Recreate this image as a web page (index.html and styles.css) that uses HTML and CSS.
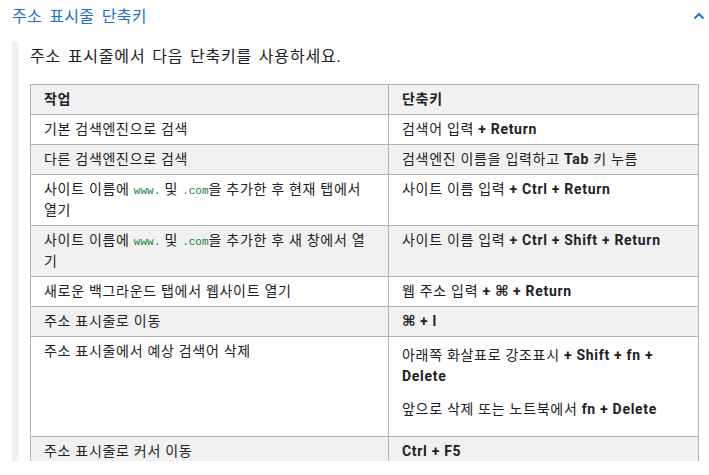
FILE: index.html
```html
<!DOCTYPE html>
<html lang="ko">
<head>
<meta charset="utf-8">
<link rel="stylesheet" href="styles.css">
</head>
<body>
<div class="header">
  <span class="title">주소 표시줄 단축키</span>
  <svg class="chev" width="12" height="8" viewBox="0 0 12 8"><path d="M1.5 6.5 L6 2 L10.5 6.5" fill="none" stroke="#1a73e8" stroke-width="2"/></svg>
</div>
<div class="panel">
  <p class="intro">주소 표시줄에서 다음 단축키를 사용하세요.</p>
  <table class="keys">
    <colgroup><col class="c1"><col class="c2"></colgroup>
    <thead>
      <tr><th>작업</th><th>단축키</th></tr>
    </thead>
    <tbody>
      <tr><td>기본 검색엔진으로 검색</td><td>검색어 입력 <b>+ Return</b></td></tr>
      <tr><td>다른 검색엔진으로 검색</td><td>검색엔진 이름을 입력하고 <b>Tab</b> 키 누름</td></tr>
      <tr><td>사이트 이름에 <code>www.</code> 및 <code>.com</code>을 추가한 후 현재 탭에서 열기</td><td>사이트 이름 입력 <b>+ Ctrl + Return</b></td></tr>
      <tr><td>사이트 이름에 <code>www.</code> 및 <code>.com</code>을 추가한 후 새 창에서 열기</td><td>사이트 이름 입력 <b>+ Ctrl + Shift + Return</b></td></tr>
      <tr><td>새로운 백그라운드 탭에서 웹사이트 열기</td><td>웹 주소 입력 <b>+ <span class="cmd">⌘</span> + Return</b></td></tr>
      <tr><td>주소 표시줄로 이동</td><td><b><span class="cmd">⌘</span> + l</b></td></tr>
      <tr><td>주소 표시줄에서 예상 검색어 삭제</td><td><p class="p1">아래쪽 화살표로 강조표시 <b>+ Shift + fn + Delete</b></p><p class="p2">앞으로 삭제 또는 노트북에서 <b>fn + Delete</b></p></td></tr>
      <tr><td>주소 표시줄로 커서 이동</td><td><b>Ctrl + F5</b></td></tr>
    </tbody>
  </table>
</div>
</body>
</html>
```

FILE: styles.css
```css
body {
  margin: 0;
  font-family: Roboto, "Noto Sans CJK KR", sans-serif;
  color: #202124;
  background: #fff;
}
.header {
  display: flex;
  align-items: center;
  justify-content: space-between;
  height: 30px;
  padding: 0 4px 0 12px;
}
.title {
  font-size: 16px;
  color: #1a6fd6;
  letter-spacing: 0.3px;
  word-spacing: 3px;
}
.chev {
  margin-top: 2px;
}
.panel {
  margin: 11px 0 0 12px;
  border-left: 7px solid #f1f1f1;
  padding-left: 11px;
  padding-right: 11px;
  height: 420px;
}
.intro {
  margin: 0;
  padding-top: 4px;
  font-size: 16px;
  line-height: 24px;
  letter-spacing: 0.8px;
  word-spacing: 2px;
}
.keys {
  margin-top: 15px;
  width: 668px;
  border-collapse: collapse;
  table-layout: fixed;
  font-size: 14px;
  line-height: 21px;
  letter-spacing: 0.7px;
}
.c1 { width: 358px; }
.c2 { width: 310px; }
.keys th, .keys td {
  border: 1px solid #b3b3b3;
  padding: 4px 12px 4px 13px;
  text-align: left;
  vertical-align: top;
}
.keys th {
  font-weight: 700;
  background: #f1f1f1;
}
.keys tbody tr:nth-child(even) td {
  background: #f1f1f1;
}
.keys b {
  font-weight: 700;
}
.keys code {
  font-family: "Liberation Mono", monospace;
  font-size: 11px;
  line-height: 0;
  letter-spacing: 0;
  color: #188038;
}
.cmd {
  font-family: "DejaVu Sans", sans-serif;
  font-size: 15px;
  line-height: 0;
  letter-spacing: 0;
}
.p1 {
  margin: 4px 0 12px;
}
.p2 {
  margin: 0 0 12px;
}
```
